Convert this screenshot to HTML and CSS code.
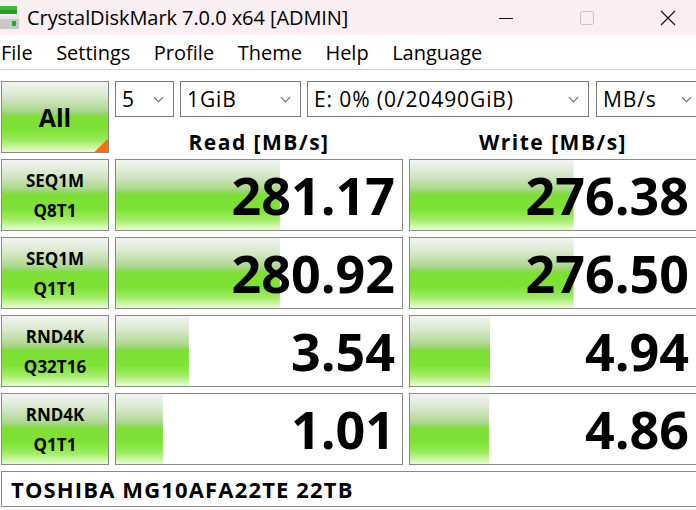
FILE: index.html
```html
<!DOCTYPE html>
<html>
<head>
<meta charset="utf-8">
<link rel="stylesheet" href="styles.css">
</head>
<body>
<div class="titlebar">
  <svg class="app-icon" viewBox="0 0 20 26" width="20" height="26">
    <rect x="0" y="1" width="17" height="4" fill="#3cb83c"/>
    <rect x="0" y="5" width="17" height="4" fill="#2a9a2a"/>
    <rect x="0" y="11" width="19" height="13" rx="1" fill="#c8c8c8"/>
    <rect x="0" y="11" width="19" height="3" fill="#e6e6e6"/>
    <rect x="12" y="16" width="4" height="5" fill="#22aa22"/>
  </svg>
  <span class="title">CrystalDiskMark 7.0.0 x64 [ADMIN]</span>
  <div class="win-controls">
    <div class="win-btn"><svg width="16" height="16" viewBox="0 0 16 16"><path d="M1 8.5h14" stroke="#111" stroke-width="1"/></svg></div>
    <div class="win-btn"><svg width="16" height="16" viewBox="0 0 16 16"><rect x="1.5" y="1.5" width="13" height="13" rx="2" fill="none" stroke="#c4c0c2" stroke-width="1"/></svg></div>
    <div class="win-btn"><svg width="16" height="16" viewBox="0 0 16 16"><path d="M1 1L15 15M15 1L1 15" stroke="#111" stroke-width="1.1"/></svg></div>
  </div>
</div>
<div class="menubar">
  <span class="menu-item">File</span>
  <span class="menu-item">Settings</span>
  <span class="menu-item">Profile</span>
  <span class="menu-item">Theme</span>
  <span class="menu-item">Help</span>
  <span class="menu-item">Language</span>
</div>
<div class="main">
  <div class="top">
    <div class="all-btn green">All</div>
    <div class="selects">
      <div class="select w-count"><span>5</span><i class="chev"></i></div>
      <div class="select w-size"><span>1GiB</span><i class="chev"></i></div>
      <div class="select w-drive"><span>E: 0% (0/20490GiB)</span><i class="chev"></i></div>
      <div class="select w-unit"><span>MB/s</span><i class="chev"></i></div>
    </div>
    <div class="col-head">Read [MB/s]</div>
    <div class="col-head">Write [MB/s]</div>
  </div>
  <div class="row">
    <div class="label green"><span>SEQ1M</span><span>Q8T1</span></div>
    <div class="value" style="--w:57.3%">281.17</div>
    <div class="value" style="--w:57.2%">276.38</div>
  </div>
  <div class="row">
    <div class="label green"><span>SEQ1M</span><span>Q1T1</span></div>
    <div class="value" style="--w:57.3%">280.92</div>
    <div class="value" style="--w:57.2%">276.50</div>
  </div>
  <div class="row">
    <div class="label green"><span>RND4K</span><span>Q32T16</span></div>
    <div class="value" style="--w:25.5%">3.54</div>
    <div class="value" style="--w:28%">4.94</div>
  </div>
  <div class="row">
    <div class="label green"><span>RND4K</span><span>Q1T1</span></div>
    <div class="value" style="--w:16.4%">1.01</div>
    <div class="value" style="--w:27.6%">4.86</div>
  </div>
  <div class="footer">TOSHIBA MG10AFA22TE 22TB</div>
</div>
</body>
</html>
```
FILE: styles.css
```css
* { box-sizing: border-box; }
html, body { margin: 0; padding: 0; }
body {
  width: 696px;
  height: 510px;
  overflow: hidden;
  background: #ffffff;
  color: #000;
  font-family: "Open Sans", "Noto Sans", sans-serif;
}
.titlebar {
  height: 35px;
  background: #f9eef2;
  display: flex;
  align-items: center;
}
.app-icon { flex: none; }
.title {
  font-size: 20px;
  letter-spacing: -0.07px;
  margin-left: 7px;
  white-space: nowrap;
}
.win-controls {
  margin-left: auto;
  margin-right: -12px;
  display: flex;
  flex: none;
}
.win-btn {
  width: 81px;
  height: 35px;
  display: flex;
  align-items: center;
  justify-content: center;
}
.menubar {
  height: 35px;
  border-bottom: 1px solid #cfcfcf;
  display: flex;
  align-items: center;
  gap: 23.5px;
  padding-left: 1px;
  font-size: 20px;
}
.main {
  padding: 11px 0 0 1px;
}
.top {
  display: grid;
  grid-template-columns: 108px 288px 288px;
  grid-template-rows: 36px 36px;
  column-gap: 6px;
}
.green {
  background: linear-gradient(180deg, #f3f3f1 0%, #dbe9d0 18%, #b3da97 38%, #98d571 45%, #7edf34 49%, #7ee236 70%, #9cec5e 84%, #e8fdd4 100%);
}
.all-btn {
  grid-row: 1 / 3;
  border: 1px solid #8a8a8a;
  display: flex;
  align-items: center;
  justify-content: center;
  font-weight: 700;
  font-size: 25px;
  background:
    linear-gradient(to top left, #ff6f0a 50%, transparent 50%) right bottom / 14px 14px no-repeat,
    linear-gradient(180deg, #f3f3f1 0%, #dbe9d0 18%, #b3da97 38%, #98d571 45%, #7edf34 49%, #7ee236 70%, #9cec5e 84%, #e8fdd4 100%);
}
.selects {
  grid-column: 2 / 4;
  display: flex;
  gap: 6px;
}
.select {
  flex: none;
  height: 36px;
  border: 1px solid #7a7a7a;
  background: #fff;
  display: flex;
  align-items: center;
  justify-content: space-between;
  padding: 0 11px 0 6px;
  font-size: 21px;
  letter-spacing: 0.9px;
  white-space: nowrap;
}
.w-count { width: 59px; }
.w-size { width: 121px; }
.w-drive { width: 282px; }
.w-unit { width: 106px; margin-left: 1px; }
.chev {
  width: 7px;
  height: 7px;
  border-right: 1px solid #666;
  border-bottom: 1px solid #666;
  transform: rotate(45deg);
  margin-top: -4px;
}
.col-head {
  display: flex;
  align-items: center;
  justify-content: center;
  font-weight: 700;
  font-size: 21px;
  letter-spacing: 1.5px;
  padding-top: 14px;
}
.row {
  display: grid;
  grid-template-columns: 108px 288px 288px;
  column-gap: 6px;
  height: 72px;
  margin-top: 6px;
}
.label {
  border: 1px solid #8a8a8a;
  display: flex;
  flex-direction: column;
  align-items: center;
  justify-content: center;
  font-weight: 700;
  font-size: 17px;
  line-height: 30px;
  padding-top: 2px;
}
.value {
  border: 1px solid #8a8a8a;
  background: linear-gradient(180deg, #f3f3f1 0%, #dbe9d0 18%, #b3da97 38%, #98d571 45%, #7edf34 49%, #7ee236 70%, #9cec5e 84%, #e8fdd4 100%) left top / var(--w) 100% no-repeat, #fff;
  display: flex;
  align-items: center;
  justify-content: flex-end;
  padding-right: 7px;
  font-weight: 700;
  font-size: 52px;
  line-height: 1;
}
.footer {
  margin-top: 6px;
  height: 36px;
  width: 700px;
  border: 1px solid #8a8a8a;
  display: flex;
  align-items: center;
  padding-left: 9px;
  font-weight: 700;
  font-size: 22px;
  letter-spacing: 1.15px;
}
```
